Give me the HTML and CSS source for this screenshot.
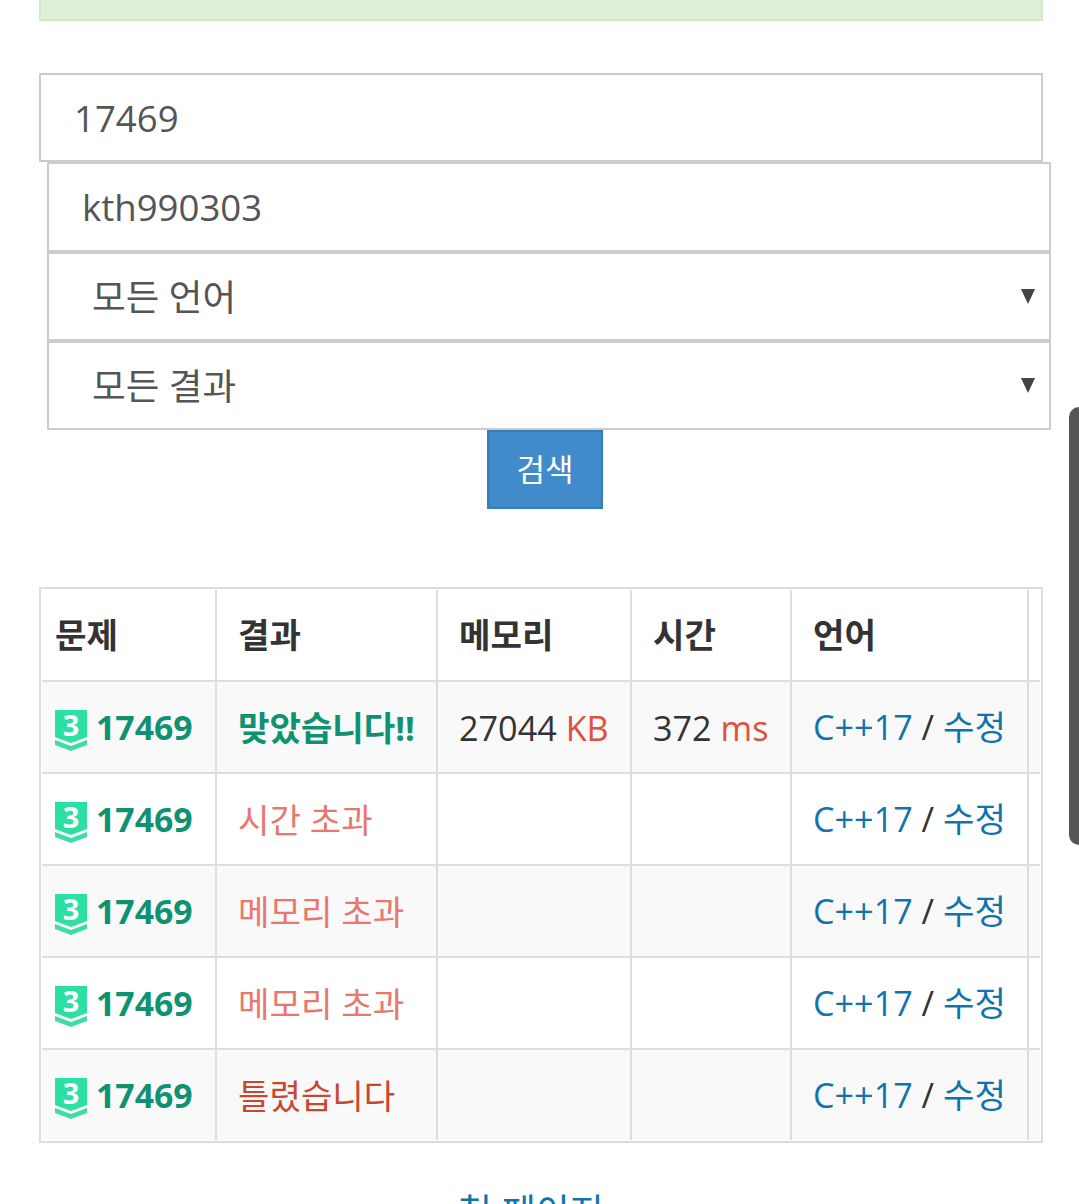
FILE: index.html
```html
<!DOCTYPE html>
<html lang="ko">
<head>
  <meta charset="UTF-8">
  <meta name="viewport" content="width=device-width, initial-scale=1.0">
  <title>채점 현황</title>
  <link rel="stylesheet" href="styles.css">
</head>
<body>
  <div class="page">
    <div class="alert"></div>

    <form class="search-form">
      <input class="field" type="text" value="17469">
      <div class="field-group">
        <input class="field" type="text" value="kth990303">
        <div class="select-wrap">
          <select class="field field-select"><option>모든 언어</option></select>
          <span class="select-arrow"></span>
        </div>
        <div class="select-wrap">
          <select class="field field-select"><option>모든 결과</option></select>
          <span class="select-arrow"></span>
        </div>
      </div>
      <button class="btn-search" type="button">검색</button>
    </form>

    <div class="table-wrap">
      <table class="status-table">
        <thead>
          <tr>
            <th class="col-problem">문제</th>
            <th class="col-result">결과</th>
            <th class="col-memory">메모리</th>
            <th class="col-time">시간</th>
            <th class="col-lang">언어</th>
            <th class="col-rest"></th>
          </tr>
        </thead>
        <tbody>
          <tr>
            <td class="problem-cell"><a class="problem-link" href="#"><svg class="tier" viewBox="0 0 32 41"><path class="tier-main" d="M0 0H32V27L16 33L0 27Z"/><path class="tier-chevron" d="M0 30L16 36L32 30V35L16 41L0 35Z"/><text class="tier-num" x="16" y="26">3</text></svg>17469</a></td>
            <td class="result-cell"><span class="result-ac">맞았습니다!!</span></td>
            <td>27044 <span class="unit">KB</span></td>
            <td>372 <span class="unit">ms</span></td>
            <td class="lang-cell"><a class="lang-link" href="#">C++17</a> / <a class="lang-link" href="#">수정</a></td>
            <td></td>
          </tr>
          <tr>
            <td class="problem-cell"><a class="problem-link" href="#"><svg class="tier" viewBox="0 0 32 41"><path class="tier-main" d="M0 0H32V27L16 33L0 27Z"/><path class="tier-chevron" d="M0 30L16 36L32 30V35L16 41L0 35Z"/><text class="tier-num" x="16" y="26">3</text></svg>17469</a></td>
            <td class="result-cell"><span class="result-limit">시간 초과</span></td>
            <td></td>
            <td></td>
            <td class="lang-cell"><a class="lang-link" href="#">C++17</a> / <a class="lang-link" href="#">수정</a></td>
            <td></td>
          </tr>
          <tr>
            <td class="problem-cell"><a class="problem-link" href="#"><svg class="tier" viewBox="0 0 32 41"><path class="tier-main" d="M0 0H32V27L16 33L0 27Z"/><path class="tier-chevron" d="M0 30L16 36L32 30V35L16 41L0 35Z"/><text class="tier-num" x="16" y="26">3</text></svg>17469</a></td>
            <td class="result-cell"><span class="result-limit">메모리 초과</span></td>
            <td></td>
            <td></td>
            <td class="lang-cell"><a class="lang-link" href="#">C++17</a> / <a class="lang-link" href="#">수정</a></td>
            <td></td>
          </tr>
          <tr>
            <td class="problem-cell"><a class="problem-link" href="#"><svg class="tier" viewBox="0 0 32 41"><path class="tier-main" d="M0 0H32V27L16 33L0 27Z"/><path class="tier-chevron" d="M0 30L16 36L32 30V35L16 41L0 35Z"/><text class="tier-num" x="16" y="26">3</text></svg>17469</a></td>
            <td class="result-cell"><span class="result-limit">메모리 초과</span></td>
            <td></td>
            <td></td>
            <td class="lang-cell"><a class="lang-link" href="#">C++17</a> / <a class="lang-link" href="#">수정</a></td>
            <td></td>
          </tr>
          <tr>
            <td class="problem-cell"><a class="problem-link" href="#"><svg class="tier" viewBox="0 0 32 41"><path class="tier-main" d="M0 0H32V27L16 33L0 27Z"/><path class="tier-chevron" d="M0 30L16 36L32 30V35L16 41L0 35Z"/><text class="tier-num" x="16" y="26">3</text></svg>17469</a></td>
            <td class="result-cell"><span class="result-wrong">틀렸습니다</span></td>
            <td></td>
            <td></td>
            <td class="lang-cell"><a class="lang-link" href="#">C++17</a> / <a class="lang-link" href="#">수정</a></td>
            <td></td>
          </tr>
        </tbody>
      </table>
    </div>

    <div class="pagination"><a href="#">첫 페이지</a></div>
  </div>
  <div class="scroll-thumb"></div>
</body>
</html>
```

FILE: styles.css
```css
html, body {
  margin: 0;
  padding: 0;
  height: 1204px;
  overflow: hidden;
  background-color: #fff;
}

body {
  font-family: "Open Sans", "Noto Sans CJK KR", sans-serif;
  font-size: 34.2px;
  color: #333;
}

.page {
  width: 1004px;
  margin-left: 39px;
}

.alert {
  height: 19px;
  background-color: #dff0d8;
  border: 2px solid #d6e9c6;
  border-top: none;
}

.search-form {
  margin-top: 52px;
}

.field {
  display: block;
  box-sizing: border-box;
  width: 1004px;
  height: 89px;
  margin: 0;
  padding: 0 33px;
  background-color: #fff;
  border: 2px solid #ccc;
  border-radius: 0;
  font-family: inherit;
  font-size: 36.6px;
  color: #555;
  outline: none;
}

.field-group {
  margin-left: 8px;
}

.field-group > .field {
  height: 90px;
}

.select-wrap {
  position: relative;
}

.field-select {
  appearance: none;
  padding-left: 43px;
}

.select-arrow {
  position: absolute;
  top: 37px;
  right: 8px;
  width: 0;
  height: 0;
  border-left: 7px solid transparent;
  border-right: 7px solid transparent;
  border-top: 15px solid #444;
}

.btn-search {
  display: block;
  box-sizing: border-box;
  width: 116px;
  height: 79px;
  margin: 0 auto;
  padding: 0 0 4px;
  position: relative;
  left: 4px;
  background-color: #428bca;
  border: 2px solid #357ebd;
  border-radius: 0;
  font-family: inherit;
  font-size: 31px;
  color: #fff;
}

.table-wrap {
  box-sizing: border-box;
  margin-top: 78px;
  height: 556px;
  padding: 1px 0 0 1px;
  border: 2px solid #ddd;
  overflow: hidden;
}

.status-table {
  table-layout: fixed;
  width: 998px;
  border-collapse: separate;
  border-spacing: 0;
}

.status-table th,
.status-table td {
  box-sizing: border-box;
  height: 92px;
  padding: 0 0 0 13px;
  border-right: 2px solid #ddd;
  white-space: nowrap;
  text-align: left;
  vertical-align: middle;
}

.status-table td {
  border-top: 2px solid #ddd;
}

.status-table th {
  height: 90px;
  padding-bottom: 4px;
  font-weight: 700;
  color: #333;
}

.status-table th:nth-child(n+2),
.status-table td:nth-child(n+2) {
  padding-left: 21px;
}

.status-table th:last-child,
.status-table td:last-child {
  padding: 0;
  border-right: none;
}

.status-table tbody tr:nth-child(odd) td {
  background-color: #f9f9f9;
}

.status-table td.result-cell {
  padding-bottom: 3px;
}

.status-table td.lang-cell {
  padding-bottom: 4px;
}

.col-problem { width: 175px; }
.col-result { width: 221px; }
.col-memory { width: 194px; }
.col-time { width: 160px; }
.col-lang { width: 237px; }
.col-rest { width: 11px; }

.problem-link {
  display: flex;
  align-items: center;
  gap: 9px;
  font-size: 33.8px;
  font-weight: 700;
  color: #0f9272;
  text-decoration: none;
}

.tier {
  width: 32px;
  height: 41px;
  flex-shrink: 0;
  position: relative;
  top: 3px;
  overflow: visible;
}

.tier-main { fill: #2be0a2; }
.tier-chevron { fill: #3fdcaa; }

.tier-num {
  font-family: "Open Sans", sans-serif;
  font-size: 29px;
  font-weight: 700;
  fill: #fff;
  text-anchor: middle;
}

.result-ac {
  font-weight: 700;
  color: #0f9272;
}

.result-limit { color: #e8776d; }
.result-wrong { color: #c9472f; }
.unit { color: #e0503f; }

.lang-link {
  color: #1173ad;
  text-decoration: none;
}

.pagination {
  margin-top: 40px;
  padding-right: 20px;
  text-align: center;
  font-size: 37px;
}

.pagination a {
  color: #1173ad;
  text-decoration: none;
}

.scroll-thumb {
  position: absolute;
  left: 1069px;
  top: 407px;
  width: 10px;
  height: 438px;
  background-color: #555;
  border-radius: 10px 0 0 10px;
}
```
